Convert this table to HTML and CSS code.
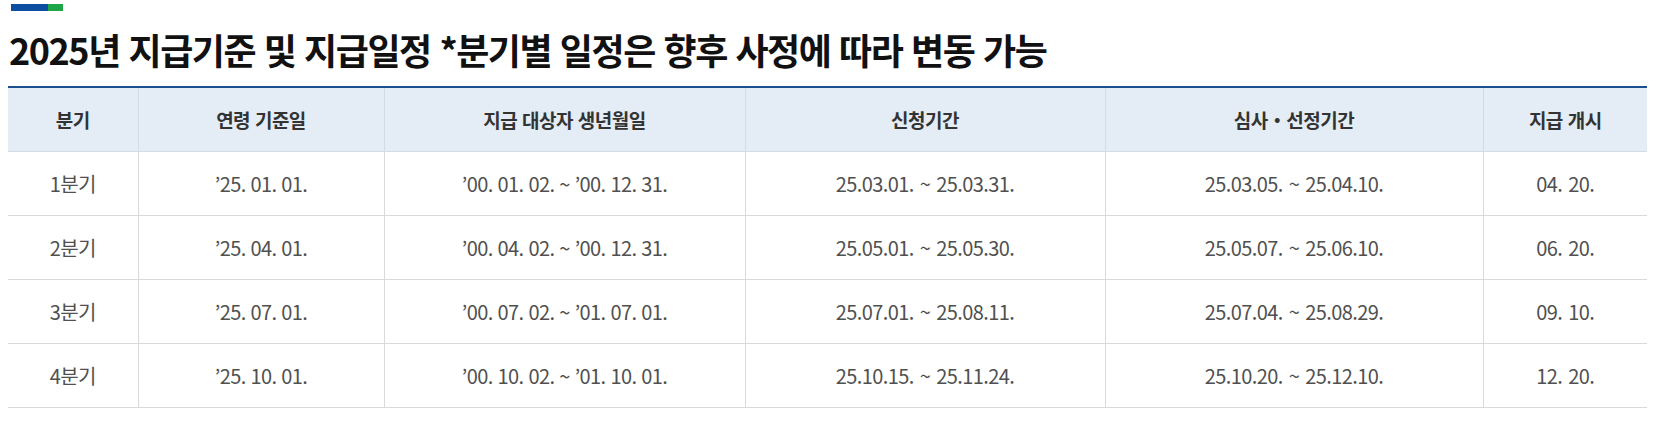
FILE: index.html
```html
<!DOCTYPE html>
<html lang="ko">
<head>
<meta charset="utf-8">
<title>2025년 지급기준 및 지급일정</title>
<link rel="stylesheet" href="styles.css">
</head>
<body>
<div class="page">
  <div class="bar"><span class="bar-blue"></span><span class="bar-green"></span></div>
  <h2 class="title">2025년 지급기준 및 지급일정 *분기별 일정은 향후 사정에 따라 변동 가능</h2>
  <table class="sched">
    <colgroup>
      <col class="c1"><col class="c2"><col class="c3"><col class="c4"><col class="c5"><col class="c6">
    </colgroup>
    <thead>
      <tr>
        <th>분기</th>
        <th>연령 기준일</th>
        <th>지급 대상자 생년월일</th>
        <th>신청기간</th>
        <th>심사・선정기간</th>
        <th>지급 개시</th>
      </tr>
    </thead>
    <tbody>
      <tr>
        <td>1분기</td>
        <td>’25. 01. 01.</td>
        <td>’00. 01. 02. ~ ’00. 12. 31.</td>
        <td>25.03.01. ~ 25.03.31.</td>
        <td>25.03.05. ~ 25.04.10.</td>
        <td>04. 20.</td>
      </tr>
      <tr>
        <td>2분기</td>
        <td>’25. 04. 01.</td>
        <td>’00. 04. 02. ~ ’00. 12. 31.</td>
        <td>25.05.01. ~ 25.05.30.</td>
        <td>25.05.07. ~ 25.06.10.</td>
        <td>06. 20.</td>
      </tr>
      <tr>
        <td>3분기</td>
        <td>’25. 07. 01.</td>
        <td>’00. 07. 02. ~ ’01. 07. 01.</td>
        <td>25.07.01. ~ 25.08.11.</td>
        <td>25.07.04. ~ 25.08.29.</td>
        <td>09. 10.</td>
      </tr>
      <tr>
        <td>4분기</td>
        <td>’25. 10. 01.</td>
        <td>’00. 10. 02. ~ ’01. 10. 01.</td>
        <td>25.10.15. ~ 25.11.24.</td>
        <td>25.10.20. ~ 25.12.10.</td>
        <td>12. 20.</td>
      </tr>
    </tbody>
  </table>
</div>
</body>
</html>
```

FILE: styles.css
```css
html, body {
  margin: 0;
  padding: 0;
  background: #ffffff;
}

.page {
  padding: 4px 12px 0 8px;
  font-family: "Noto Sans CJK KR", "Noto Sans", sans-serif;
}

.bar {
  display: flex;
  height: 7px;
  margin-left: 3px;
}

.bar-blue {
  width: 37px;
  background: #0b4ea2;
}

.bar-green {
  width: 15px;
  background: #1ea546;
}

.title {
  margin: 15px 0 0 1px;
  font-size: 36px;
  line-height: 46px;
  font-weight: 700;
  color: #111111;
  letter-spacing: -1.45px;
  white-space: nowrap;
}

.sched {
  width: 1639px;
  margin-top: 14px;
  border-collapse: collapse;
  table-layout: fixed;
  border-top: 2px solid #1c4f8c;
}

.c1 { width: 130px; }
.c2 { width: 246px; }
.c3 { width: 361px; }
.c4 { width: 360px; }
.c5 { width: 378px; }
.c6 { width: 164px; }

.sched th {
  height: 63px;
  padding: 0;
  background: #e4ecf5;
  color: #333333;
  font-size: 19px;
  font-weight: 700;
  letter-spacing: -0.5px;
  text-align: center;
  border-left: 1px solid #d3dbe5;
  border-bottom: 1px solid #d3dbe5;
}

.sched td {
  height: 63px;
  padding: 0;
  color: #505050;
  font-size: 20px;
  font-weight: 400;
  letter-spacing: -0.6px;
  word-spacing: 1px;
  text-align: center;
  border-left: 1px solid #d9d9d9;
  border-bottom: 1px solid #d9d9d9;
}

.sched th:first-child,
.sched td:first-child {
  border-left: none;
}
```
